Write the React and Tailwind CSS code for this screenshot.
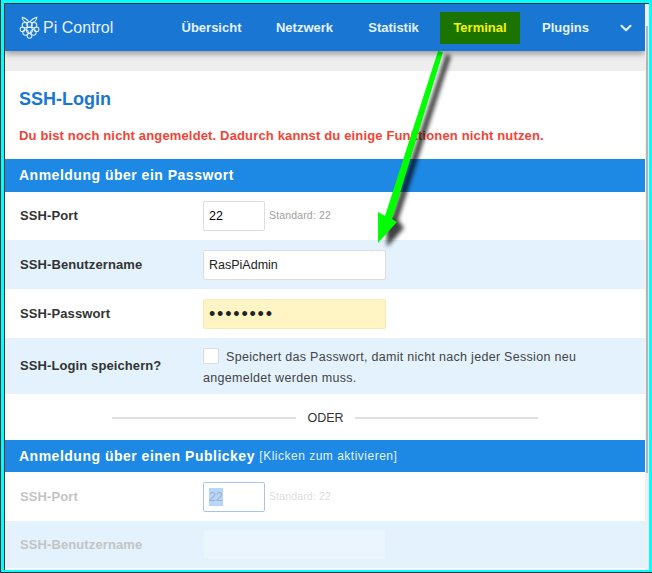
import React from 'react';
import { ChevronDown } from 'lucide-react';

function RaspberryLogo() {
  return (
    <svg width="21" height="24" viewBox="0 0 23 26" fill="none" stroke="#e3f2fd" strokeWidth="1.1">
      <path d="M11 6.5C9.5 4 7 2 3.5 1.2 3.5 4 6 6.5 9 7.2M12 6.5C13.5 4 16 2 19.5 1.2 19.5 4 17 6.5 14 7.2" />
      <circle cx="11.5" cy="9.5" r="3" />
      <circle cx="6.5" cy="10" r="3" />
      <circle cx="16.5" cy="10" r="3" />
      <circle cx="3.8" cy="14.5" r="2.6" />
      <circle cx="19.2" cy="14.5" r="2.6" />
      <circle cx="11.5" cy="15.2" r="3.3" />
      <circle cx="7.2" cy="18" r="3" />
      <circle cx="15.8" cy="18" r="3" />
      <circle cx="11.5" cy="21.5" r="2.6" />
    </svg>
  );
}

function NavLink({ children, width, active }) {
  return (
    <a className={`flex h-8 items-center justify-center whitespace-nowrap ${width} ${active ? 'bg-[#1b7300] text-[#f4f400]' : 'text-[#e3f2fd]'}`}>
      {children}
    </a>
  );
}

function Row({ label, tone, muted, height = 'h-[49px]', children }) {
  return (
    <div className={`flex items-center pl-[15px] ${tone ? 'bg-[#e3f2fd]' : 'bg-white'} ${height}`}>
      <div className={`w-[183px] shrink-0 text-[13px] font-bold tracking-[0.1px] ${muted ? 'text-[#c4c4c4]' : 'text-[#333]'}`}>{label}</div>
      {children}
    </div>
  );
}

function Field({ value, width, extra }) {
  return (
    <div className={`flex h-[30px] items-center rounded-[2px] border pl-[5px] pt-px text-[12.5px] ${width} ${extra}`}>{value}</div>
  );
}

function Hint({ children, muted }) {
  return <span className={`ml-1 text-[10.5px] tracking-[0.15px] ${muted ? 'text-[#ddd]' : 'text-[#9e9e9e]'}`}>{children}</span>;
}

function SectionBar({ height = 'h-8', children }) {
  return <div className={`flex items-center bg-[#1e88e5] pl-[14px] text-sm font-bold tracking-[0.5px] text-white ${height}`}>{children}</div>;
}

function Arrow() {
  return (
    <svg className="absolute left-0 top-0" width="652" height="573" viewBox="0 0 652 573">
      <defs>
        <filter id="blur" x="-30%" y="-10%" width="160%" height="120%">
          <feGaussianBlur stdDeviation="2" />
        </filter>
      </defs>
      <g filter="url(#blur)" fill="#000" fillOpacity="0.75">
        <path d="M446 54 451 56 398 220 404 228 387 247 386 216 392 217Z" />
      </g>
      <path d="M438 51 443 52 392 219 397 222 378 243 378 212 385 216Z" fill="#00ff00" />
    </svg>
  );
}

export default function App() {
  return (
    <div className="relative h-[573px] w-[652px] overflow-hidden bg-white font-['Liberation_Sans',Arial,sans-serif]">
      <div className="h-full border-b border-l border-[#333]">
        <div className="h-full border-x-[3px] border-b-2 border-t-[3px] border-[#00ffff]">
          <div className="flex h-full border-l border-t border-[#333]">
            <div className="flex w-[640px] shrink-0 flex-col overflow-hidden">
              <nav className="z-10 flex h-[47px] shrink-0 items-center bg-[#1976d2] pl-[14px] shadow-[0_3px_6px_rgba(0,0,0,0.35)]">
                <RaspberryLogo />
                <span className="ml-[3px] w-[68px] whitespace-nowrap text-base text-[#e3f2fd]">Pi Control</span>
                <div className="ml-[71px] flex items-center text-[13px] font-bold">
                  <NavLink width="w-[59px]">Übersicht</NavLink>
                  <div className="w-[34px]" />
                  <NavLink width="w-[59px]">Netzwerk</NavLink>
                  <div className="w-[35px]" />
                  <NavLink width="w-[49px]">Statistik</NavLink>
                  <div className="w-[22px]" />
                  <NavLink width="w-20" active>Terminal</NavLink>
                  <div className="w-[22px]" />
                  <NavLink width="w-[47px]">Plugins</NavLink>
                </div>
                <ChevronDown className="ml-7 text-[#e3f2fd]" size={18} strokeWidth={2.8} />
              </nav>
              <div className="h-5 shrink-0 bg-[#eeeeee]" />
              <main className="flex-1 bg-white">
                <h2 className="pl-[14px] pt-[18px] text-lg font-bold leading-5 text-[#1976d2]">SSH-Login</h2>
                <p className="mb-[15px] mt-[19px] pl-[14px] text-[13px] font-bold leading-4 tracking-[0.15px] text-[#f44336]">
                  Du bist noch nicht angemeldet. Dadurch kannst du einige Funktionen nicht nutzen.
                </p>
                <SectionBar height="h-[33px] pb-px">Anmeldung über ein Passwort</SectionBar>
                <Row label="SSH-Port" height="h-12">
                  <Field value="22" width="w-[62px]" extra="border-[#ddd] bg-white text-black" />
                  <Hint>Standard: 22</Hint>
                </Row>
                <Row label="SSH-Benutzername" tone>
                  <Field value="RasPiAdmin" width="w-[183px]" extra="border-[#ddd] bg-white text-[#222]" />
                </Row>
                <Row label="SSH-Passwort">
                  <Field value={<span className="text-lg leading-none tracking-[1.8px]">••••••••</span>} width="w-[183px]" extra="border-[#fbe8b8] bg-[#fff5c4] text-[#222]" />
                </Row>
                <Row label="SSH-Login speichern?" tone height="h-14">
                  <div className="w-[385px] pt-[3px] text-[12.5px] leading-[21px] tracking-[0.3px] text-[#444]">
                    <span className="mr-[7px] inline-block h-4 w-4 rounded-[2px] border border-[#ddd] bg-white align-[-3px]" />
                    Speichert das Passwort, damit nicht nach jeder Session neu angemeldet werden muss.
                  </div>
                </Row>
                <div className="flex h-[46px] items-center justify-center gap-[11px] bg-white pt-0.5">
                  <div className="h-0.5 w-[184px] bg-[#e0e0e0]" />
                  <span className="text-[12.5px] text-[#333]">ODER</span>
                  <div className="h-0.5 w-[183px] bg-[#e0e0e0]" />
                </div>
                <SectionBar>
                  Anmeldung über einen Publickey&nbsp;
                  <span className="text-xs font-normal tracking-[0.5px] text-[#e3f2fd]">[Klicken zum aktivieren]</span>
                </SectionBar>
                <Row label="SSH-Port" muted>
                  <Field
                    value={<span className="bg-[#b3d7ff] text-[#aab]">22</span>}
                    width="w-[62px]"
                    extra="border-[#a9c4e8] bg-white"
                  />
                  <Hint muted>Standard: 22</Hint>
                </Row>
                <Row label="SSH-Benutzername" tone muted height="h-[47px]">
                  <Field value="" width="w-[183px]" extra="border-[#e6f1fb] bg-[#ebf5fe]" />
                </Row>
              </main>
            </div>
            <div className="flex-1 bg-[#f0f0f0] pt-[22px]">
              <div className="ml-px h-[447px] w-0.5 bg-[#b5b5b5]" />
            </div>
          </div>
        </div>
      </div>
      <Arrow />
    </div>
  );
}
